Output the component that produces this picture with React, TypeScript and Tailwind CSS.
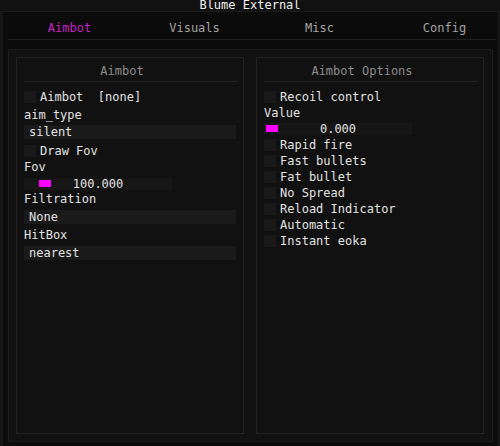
import React from "react";

const mono = "font-['DejaVu_Sans_Mono',monospace]";

const Checkbox = ({ label, className = "" }: { label: string; className?: string }) => (
  <div className={`flex items-center h-[12px] ${className}`}>
    <div className="w-[12px] h-[12px] bg-[#1a1a1a] shrink-0" />
    <span className="ml-[4px] leading-[12px] text-[#e2e2e2] whitespace-pre">{label}</span>
  </div>
);

const Label = ({ text, className = "" }: { text: string; className?: string }) => (
  <div className={`h-[14px] leading-[14px] text-[#e2e2e2] ${className}`}>{text}</div>
);

const Combo = ({ value, className = "" }: { value: string; className?: string }) => (
  <div className={`h-[14px] leading-[14px] bg-[#1a1a1a] pl-[5px] text-[#e2e2e2] ${className}`}>{value}</div>
);

const Slider = ({ value, grab, className = "" }: { value: string; grab: number; className?: string }) => (
  <div className={`relative w-[148px] h-[12px] leading-[12px] bg-[#161616] text-center text-[#e2e2e2] ${className}`}>
    <div className="absolute top-[2px] w-[12px] h-[7px] bg-[#ff00ff]" style={{ left: grab }} />
    <span className="relative">{value}</span>
  </div>
);

const Panel = ({ title, children }: { title: string; children: React.ReactNode }) => (
  <div className="w-[228px] h-[377px] border border-[#232323] bg-[#111111] flex flex-col">
    <div className="mt-[6px] mx-[7px] pr-[16px] h-[14px] leading-[14px] text-center text-[#8c8c8c]">{title}</div>
    <div className="mt-[3px] ml-[7px] mr-[6px] h-px bg-[#242424]" />
    <div className="flex flex-col px-[7px] mt-[9px]">{children}</div>
  </div>
);

export default function App() {
  const options = ["Rapid fire", "Fast bullets", "Fat bullet", "No Spread", "Reload Indicator", "Automatic", "Instant eoka"];

  return (
    <div className={`w-[500px] h-[446px] bg-[#0b0b0b] overflow-hidden text-[12px] ${mono}`}>
      {/* title bar */}
      <div className="h-[11px] leading-[11px] bg-[#111111] text-center text-[#f0f0f0] border-b border-[#1c1c1c] box-content">
        Blume External
      </div>

      <div className="h-[434px] border-x-[3px] border-[#151515] flex flex-col">
        {/* tabs */}
        <div className="h-[27px] pt-[9px] pl-[4px] flex overflow-hidden">
          {["Aimbot", "Visuals", "Misc", "Config"].map((t, i) => (
            <div
              key={t}
              className={`w-[125px] shrink-0 text-center leading-[14px] ${i === 0 ? "text-[#c424c4]" : "text-[#a3a3a3]"}`}
            >
              {t}
            </div>
          ))}
        </div>
        <div className="ml-[5px] mr-[1px] h-px bg-[#202020]" />

        {/* content frame */}
        <div className="mt-[9px] ml-[5px] w-[485px] h-[393px] border border-[#1c1c1c] bg-[#111111] flex gap-[12px] pt-[7px] pl-[7px]">
          <Panel title="Aimbot">
            <Checkbox label="Aimbot  [none]" />
            <Label text="aim_type" className="mt-[5px]" />
            <Combo value="silent" className="mt-[3px]" />
            <Checkbox label="Draw Fov" className="mt-[6px]" />
            <Label text="Fov" className="mt-[3px]" />
            <Slider value="100.000" grab={15} className="mt-[4px]" />
            <Label text="Filtration" className="mt-[2px]" />
            <Combo value="None" className="mt-[4px]" />
            <Label text="HitBox" className="mt-[4px]" />
            <Combo value="nearest" className="mt-[4px]" />
          </Panel>

          <Panel title="Aimbot Options">
            <Checkbox label="Recoil control" />
            <div className="mt-[4px] h-[12px] leading-[12px] text-[#e2e2e2]">Value</div>
            <Slider value="0.000" grab={2} className="mt-[4px]" />
            {options.map((o) => (
              <Checkbox key={o} label={o} className="mt-[4px]" />
            ))}
          </Panel>
        </div>
      </div>
    </div>
  );
}
